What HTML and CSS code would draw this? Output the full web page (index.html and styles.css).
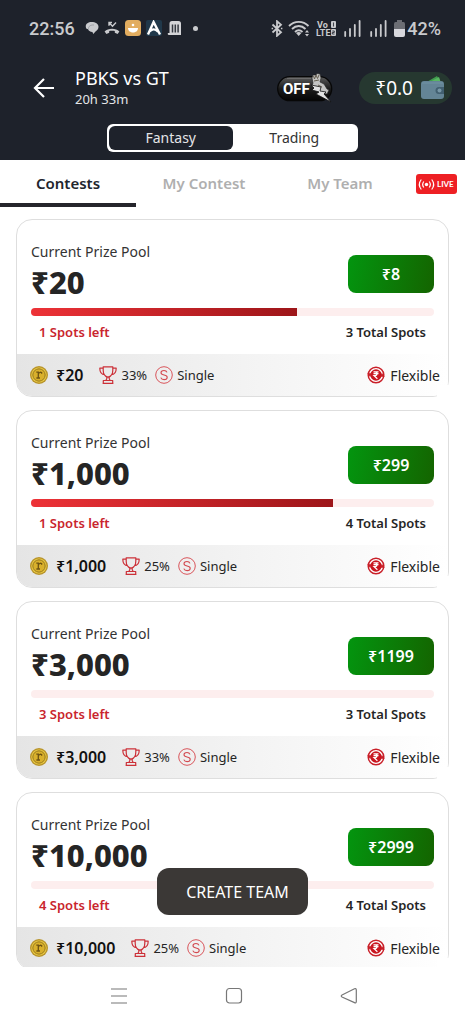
FILE: index.html
```html
<!DOCTYPE html>
<html lang="en">
<head>
<meta charset="utf-8">
<meta name="viewport" content="width=device-width, initial-scale=1">
<title>PBKS vs GT – Contests</title>
<link rel="stylesheet" href="styles.css">
</head>
<body>
<svg class="defs" aria-hidden="true">
  <defs>
    <linearGradient id="toggleFill" x1="0" y1="0" x2="0" y2="1"><stop offset="0" stop-color="#5b5b5b"/><stop offset=".5" stop-color="#1c1c1c"/><stop offset="1" stop-color="#050505"/></linearGradient>
    <symbol id="coin" viewBox="0 0 18 18">
      <circle cx="9" cy="9" r="9" fill="#b8942c"/><circle cx="9" cy="9" r="7.6" fill="#f0cf45"/><circle cx="9" cy="9" r="6.2" fill="#d9b02c" stroke="#8d701c" stroke-width=".9"/>
      <path d="M6.3 6.2H8.3V12M6.4 12h3.6M8.3 8.2c.5-1.6 2-2.3 3.3-1.7v1.3" fill="none" stroke="#6e5312" stroke-width="1.3"/>
    </symbol>
    <symbol id="trophy" viewBox="0 0 18 18">
      <path d="M4.2.8h9.6v3.4c0 3.7-1.6 6.3-4.8 6.9-3.2-.6-4.8-3.2-4.8-6.9zM4.2 2.2H.8c0 4 1.500 6.300 5 6.400M13.800 2.200h3.400c0 4-1.500 6.300-5 6.400M7.800 11v1.700L6.800 14.500h4.400l-1-1.800V11M4.300 17.300v-2.800h9.400v2.800zM3.600 17.300h10.800" fill="none" stroke="#cc3038" stroke-width="1.200" stroke-linejoin="round"/>
    </symbol>
    <symbol id="single" viewBox="0 0 18 18">
      <circle cx="9" cy="9" r="8.300" fill="none" stroke="#d9555b" stroke-width="1"/><path d="M12 6.400C11.500 5 10.300 4.500 9 4.500c-1.700 0-3 .8-3 2.200C6 9.900 12.200 8 12.200 11.200c0 1.500-1.400 2.400-3.100 2.400-1.600 0-2.800-.7-3.300-2" fill="none" stroke="#d34a50" stroke-width="1.100"/>
    </symbol>
    <symbol id="flex" viewBox="0 0 18 18">
      <circle cx="9" cy="9" r="7.800" fill="#fff" stroke="#c91f28" stroke-width="1.500"/><circle cx="9" cy="9" r="5.700" fill="#c9151f"/>
      <path d="M.2 7.200 3.200 11 4.800 7.200zM17.800 10.800 14.800 7 13.200 10.800z" fill="#c91f28"/>
      <path d="M6.500 5.800h5M6.500 7.700h5M7 5.800c4-.2 4 3.800 0 3.800L10.400 12.700" fill="none" stroke="#fff" stroke-width="1.200"/>
    </symbol>
    <symbol id="signal" viewBox="0 0 17 17"><path d="M1.200 16v-4M6 16V9M10.800 16V5M15.600 16V1" stroke="#c9cacd" stroke-width="1.800" stroke-linecap="round"/></symbol>
  </defs>
</svg>
<div class="app">
  <header class="header">
    <div class="status">
      <div class="status-side status-left">
        <time>22:56</time>
        <svg width="14" height="14" viewBox="0 0 14 14"><path d="M6.500 1C10.500 1 13.500 2.800 13.500 5.800c0 2.300-1.200 3.800-3 4.600L8.300 13 7.400 10.900C5 10.900 3.500 9.800 3 8.300L1.200 7.500C-.4 3.500 2.500 1 6.500 1z" fill="#c9cacd"/><path d="M3.600 8.500C3 5 5.800 3.800 9 4" fill="none" stroke="#85888e" stroke-width=".6"/></svg>
        <svg width="16" height="14" viewBox="0 0 16 14"><path d="M.6 10.500C4 6.900 12 6.900 15.400 10.500L13.600 13 10.800 11.800V10C9.300 9.500 6.700 9.500 5.200 10v1.800L2.400 13z" fill="#c9cacd"/><path d="M5 4.800V1.500h3M5.200 1.700l3.300 3.500L12 1.500" fill="none" stroke="#c9cacd" stroke-width="1.400"/></svg>
        <svg width="16" height="16" viewBox="0 0 16 16"><rect width="16" height="16" rx="3.500" fill="#e2ad60"/><path d="M3 8h10c0 6-10 6-10 0z" fill="#fff"/><circle cx="8" cy="5" r="1.300" fill="#fff"/></svg>
        <svg width="16" height="16" viewBox="0 0 16 16"><rect width="16" height="16" rx="2" fill="#20384a"/><path d="M2 14.500 7.600 2 14 14.500M3.800 11.200C7 8 9.500 9.500 12 11.500" fill="none" stroke="#fff" stroke-width="2.400"/></svg>
        <svg width="15" height="16" viewBox="0 0 15 16"><path d="M2.500 13V3.500Q2.500 1 5 1h6.500Q14 1 14 3.500V15H1.500Q0 14 1 13z" fill="#d4d4d7"/><path d="M5.500 4.500v8M8.300 4.500v8M11.100 4.500v8" stroke="#353941" stroke-width="1.500"/></svg>
        <span class="dot"></span>
      </div>
      <div class="status-side status-right">
        <svg width="12" height="17" viewBox="0 0 12 17"><path d="M1.500 4.500 10 12.300 6 15.800V1.200L10 4.700 1.500 12.500" fill="none" stroke="#c9cacd" stroke-width="1.800"/><path d="M.6 8.500h1.500M9.900 8.500h1.500" stroke="#c9cacd" stroke-width="1.500"/></svg>
        <svg width="23" height="17" viewBox="0 0 23 17"><path d="M1 6C6.500.5 15 .5 20.500 6M4 9c4-4 9.500-4 13.500 0M7 12c2.500-2.300 5-2.300 7.500 0" fill="none" stroke="#c9cacd" stroke-width="1.900"/><path d="m8 13 2.700 3 2.700-3q-2.700-1.800-5.400 0zM17 12.500l2-2.500 2 2.500zM17 14h4l-2 2.500z" fill="#c9cacd"/></svg>
        <svg width="21" height="17" viewBox="0 0 21 17" class="volte"><text x="1" y="8">Vo</text><text x="0" y="16">LTE</text><rect x="15" y="1" width="5" height="7" rx="1"/><rect x="15" y="9" width="5" height="7" rx="1"/><path d="M17.500 2.500V6.500M16.300 11h2v1.500h-2V14h2.200" fill="none" stroke="#1e222b" stroke-width=".8"/></svg>
        <svg class="sig" width="17" height="17"><use href="#signal"/></svg>
        <svg class="sig" width="17" height="17"><use href="#signal"/></svg>
        <span class="battery"><svg width="11" height="17" viewBox="0 0 11 17"><path d="M3 2V0h5v2h1.500Q11 2 11 4V9H0V4Q0 2 1.500 2z" fill="#6c6e74"/><path d="M0 9h11v6q0 2-2 2H2q-2 0-2-2z" fill="#d7d7dc"/></svg>42%</span>
      </div>
    </div>
    <div class="topbar">
      <button class="back" aria-label="Back"><svg width="22" height="22" viewBox="0 0 22 22"><path d="M21 11H2M11 2 2 11l9 9" fill="none" stroke="#fff" stroke-width="2.200"/></svg></button>
      <div class="match"><h1>PBKS vs GT</h1><p>20h 33m</p></div>
      <button class="power" aria-label="Power off">
        <svg width="56" height="30" viewBox="0 0 56 30"><rect x=".7" y="3.700" width="54" height="24" rx="12" fill="url(#toggleFill)" stroke="#070707" stroke-width="1.300"/><path d="M10 5.500H34" stroke="#777" stroke-width=".7"/><text x="6" y="21" class="off">OFF</text><path d="m35 5 1-3 3 0 1-1.500 3 .5 1 4-1 4 4 2 3 5 2 1-2 4-5-1-5-4-5-3 1-3z" fill="#c4c4c3" stroke="#222" stroke-width=".6"/><path d="m36.500 3 1 3 1.500-4 1.500 3.500L42 2M37 8l5-1M41 12l4 2" fill="none" stroke="#655e50" stroke-width="1"/><path d="m34 12 10 2-1 4 6 1-2 2 7 8-15-8 3-2-7-2 2-2z" fill="#e2e2e2" stroke="#111" stroke-width=".8"/></svg>
      </button>
      <button class="wallet">₹0.0
        <svg width="24" height="24" viewBox="0 0 24 24"><path d="M4 7 16 0l4 7z" fill="#3f9b4d"/><path d="M7 7 18 1l2 6z" fill="#58b862"/><rect y="5" width="23" height="18" rx="3" fill="#648596"/><path d="M1 7h21" stroke="#7193a4" stroke-width="1"/><path d="M23 11h-5a3.500 3.500 0 0 0 0 7h5z" fill="#426071"/><circle cx="18.500" cy="14.500" r="2" fill="#7797a7"/></svg>
      </button>
    </div>
    <div class="segment"><button class="selected">Fantasy</button><button>Trading</button></div>
  </header>
  <nav class="tabs">
    <a href="#contests" class="active">Contests</a><a href="#my-contest">My Contest</a><a href="#my-team">My Team</a>
    <button class="live" aria-label="Live"><svg width="41" height="20" viewBox="0 0 41 20"><circle cx="10.500" cy="10.500" r="1.700" fill="#fff"/><path d="M7.800 7.500q-2.300 3 0 6M5.300 5.500q-4 5 0 10M13.200 7.500q2.300 3 0 6M15.700 5.500q4 5 0 10" fill="none" stroke="#fff" stroke-width="1.200"/><text x="21" y="13">LIVE</text></svg></button>
  </nav>
  <main class="list" id="contests">
    <article class="card">
      <div class="card-body">
        <div class="prize"><div><h2>Current Prize Pool</h2><strong>₹20</strong></div><button class="join">₹8</button></div>
        <div class="bar"><div class="fill" style="width:66%"></div></div>
        <div class="spots"><span class="left">1 Spots left</span><span>3 Total Spots</span></div>
      </div>
      <footer class="card-foot"><svg class="ic"><use href="#coin"/></svg><b>₹20</b><svg class="ic"><use href="#trophy"/></svg><span class="pct">33%</span><svg class="ic"><use href="#single"/></svg><span>Single</span><span class="flexible"><svg class="ic"><use href="#flex"/></svg>Flexible</span></footer>
    </article>
    <article class="card">
      <div class="card-body">
        <div class="prize"><div><h2>Current Prize Pool</h2><strong>₹1,000</strong></div><button class="join">₹299</button></div>
        <div class="bar"><div class="fill" style="width:75%"></div></div>
        <div class="spots"><span class="left">1 Spots left</span><span>4 Total Spots</span></div>
      </div>
      <footer class="card-foot"><svg class="ic"><use href="#coin"/></svg><b>₹1,000</b><svg class="ic"><use href="#trophy"/></svg><span class="pct">25%</span><svg class="ic"><use href="#single"/></svg><span>Single</span><span class="flexible"><svg class="ic"><use href="#flex"/></svg>Flexible</span></footer>
    </article>
    <article class="card">
      <div class="card-body">
        <div class="prize"><div><h2>Current Prize Pool</h2><strong>₹3,000</strong></div><button class="join">₹1199</button></div>
        <div class="bar"></div>
        <div class="spots"><span class="left">3 Spots left</span><span>3 Total Spots</span></div>
      </div>
      <footer class="card-foot"><svg class="ic"><use href="#coin"/></svg><b>₹3,000</b><svg class="ic"><use href="#trophy"/></svg><span class="pct">33%</span><svg class="ic"><use href="#single"/></svg><span>Single</span><span class="flexible"><svg class="ic"><use href="#flex"/></svg>Flexible</span></footer>
    </article>
    <article class="card">
      <div class="card-body">
        <div class="prize"><div><h2>Current Prize Pool</h2><strong>₹10,000</strong></div><button class="join">₹2999</button></div>
        <div class="bar"></div>
        <div class="spots"><span class="left">4 Spots left</span><span>4 Total Spots</span></div>
      </div>
      <footer class="card-foot"><svg class="ic"><use href="#coin"/></svg><b>₹10,000</b><svg class="ic"><use href="#trophy"/></svg><span class="pct">25%</span><svg class="ic"><use href="#single"/></svg><span>Single</span><span class="flexible"><svg class="ic"><use href="#flex"/></svg>Flexible</span></footer>
    </article>
  </main>
  <div class="bottom">
    <button class="create">CREATE TEAM</button>
    <button aria-label="Recent apps"><svg width="18" height="18" viewBox="0 0 18 18"><path d="M1 2h16M1 9h16M1 16h16" stroke="#777" stroke-width="1.200"/></svg></button>
    <button aria-label="Home"><svg width="18" height="18" viewBox="0 0 18 18"><rect x="1.500" y="1.500" width="15" height="14.500" rx="3" fill="none" stroke="#777" stroke-width="1.200"/></svg></button>
    <button aria-label="Go back"><svg width="18" height="18" viewBox="0 0 18 18"><path d="M2 8 14.500 1.800Q16.300 1 16.300 3v11.500q0 2-1.800 1.100L2 10Q.5 9 2 8z" fill="none" stroke="#777" stroke-width="1.200"/></svg></button>
  </div>
</div>
</body>
</html>
```
FILE: styles.css
```css
* { box-sizing: border-box; }
body { margin: 0; background: #fff; color: #252525; font-family: "Noto Sans", "Open Sans", sans-serif; }
h1, h2, p { margin: 0; font-weight: 400; }
button { border: 0; padding: 0; background: none; color: inherit; font: inherit; cursor: pointer; }
svg { display: block; flex: none; }
.defs { position: absolute; width: 0; height: 0; }
.app { display: flex; flex-direction: column; height: 100vh; }

.header { flex: none; padding-bottom: 8px; background: #1e222b; color: #fff; }
.status { display: flex; justify-content: space-between; height: 56px; padding: 0 24px 0 29px; color: #c9cacd; font: 500 18px Roboto, sans-serif; }
.status-side { display: flex; align-items: center; gap: 5px; }
.status-left time { margin-right: 5px; }
.sig { margin: 0 2px; }
.dot { width: 5px; height: 5px; margin-left: 6px; border-radius: 50%; background: #c9cacd; }
.battery { display: flex; align-items: center; gap: 2px; }
.volte { fill: #c9cacd; font: 700 9px Roboto, sans-serif; }
.topbar { display: flex; align-items: center; height: 64px; padding: 0 13px 0 33px; }
.match { flex: 1; margin-left: 20px; }
.match h1 { font-size: 18px; line-height: 22px; }
.match p { font-size: 13px; line-height: 20px; color: #e4e5e7; }
.power { margin-right: 26px; }
.off { fill: #fff; font: 700 15px Roboto, sans-serif; }
.wallet { display: flex; align-items: center; gap: 8px; height: 32px; padding: 0 7px 0 16px; border-radius: 16px; background: #263830; font-size: 19px; }
.segment { display: grid; grid-template-columns: 1fr 1fr; width: 54%; height: 28px; margin: 4px auto 0; padding: 2px; border-radius: 6px; background: #fff; color: #333; font-size: 14px; line-height: 24px; }
.segment .selected { border-radius: 6px; background: #1e222b; color: #e4e5e7; }

.tabs { display: grid; grid-template-columns: 1fr 1fr 1fr 57px; align-items: center; flex: none; height: 47px; font-size: 15px; font-weight: 600; text-align: center; }
.tabs a { height: 47px; border-bottom: 4px solid transparent; color: #afafaf; line-height: 47px; text-decoration: none; }
.tabs .active { border-color: #25252b; color: #22252d; }
.live { justify-self: center; border-radius: 3px; background: #ee2024; }
.live text { fill: #fff; font: 700 8px Lato, sans-serif; }

.list { display: flex; flex: 1; flex-direction: column; gap: 13px; min-height: 0; padding: 12px 16px 0; overflow: hidden; }
.card { position: relative; flex: none; border: 1px solid #dedede; border-radius: 16px; background: #fff; }
/* the outline fades out at the bottom right corner */
.card::after { content: ""; position: absolute; right: -1px; bottom: -1px; width: 12px; height: 12px; background: #fff; }
.card-body { height: 134px; padding: 23px 14px 0; }
.prize { display: flex; align-items: center; justify-content: space-between; height: 58px; }
.prize h2 { color: #333; font-size: 14px; line-height: 20px; }
.prize strong { display: block; font-size: 31px; font-weight: 800; line-height: 40px; }
.join { width: 86px; height: 38px; margin-top: 4px; border-radius: 8px; background: linear-gradient(100deg, #03950f, #146400); color: #fff; font-size: 16px; font-weight: 600; }
.bar { height: 8px; margin-top: 7px; border-radius: 4px; background: #fdeeee; overflow: hidden; }
.fill { height: 100%; background: linear-gradient(90deg, #ed3237, #9d1519); }
.spots { display: flex; justify-content: space-between; padding: 6px 8px; font-size: 13px; font-weight: 600; line-height: 20px; }
.left { color: #c9252d; }
.card-foot { display: flex; align-items: center; height: 42px; padding: 0 8px 0 13px; border-radius: 0 0 15px 15px; background: linear-gradient(90deg, #e5e5e5, #f5f5f5 60%, #fff); font-size: 13px; }
.ic { width: 18px; height: 18px; }
.card-foot b { margin: 0 16px 0 8px; color: #111; font-size: 16px; font-weight: 600; }
.pct { margin: 0 8px 0 5px; }
.ic + span { margin-left: 4px; }
.flexible { display: flex; align-items: center; gap: 5px; margin-left: auto; font-size: 14px; }

.bottom { position: relative; display: flex; align-items: center; justify-content: space-between; flex: none; height: 57px; padding: 0 107px 0 110px; background: #fff; }
.bottom .create { position: absolute; bottom: 109px; left: 50%; width: 151px; height: 47px; margin-left: -76px; padding-left: 11px; border-radius: 12px; background: #3b3836; color: #fff; font-size: 16px; white-space: nowrap; }
.bottom .create { z-index: 1; }
```
